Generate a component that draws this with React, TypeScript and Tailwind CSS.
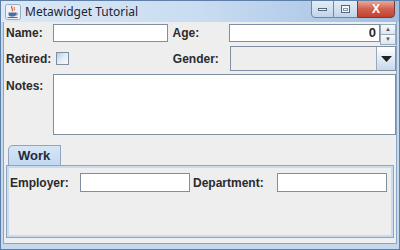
import React from "react";

const font = { fontFamily: '"Liberation Sans", Arial, sans-serif' };

function Field({ className = "" }: { className?: string }) {
  return <div className={"bg-white border border-[#7f8fa0] " + className} />;
}

function JavaIcon() {
  return (
    <svg width="16" height="16" viewBox="0 0 16 16">
      <rect x="0.5" y="0.5" width="15" height="15" rx="2" fill="#eef2f8" stroke="#9aaac0" />
      <path d="M7 2 C5 4 9 5 7 7" stroke="#e05a1a" strokeWidth="1.3" fill="none" />
      <path d="M9.5 3 C8 4.5 10.5 5 9 6.5" stroke="#e05a1a" strokeWidth="1" fill="none" />
      <path d="M3.5 8.5 H11 V10.5 C11 12 9.5 12.5 7.2 12.5 C5 12.5 3.5 12 3.5 10.5 Z" fill="#4a6fa5" />
      <path d="M11 9 C13 9 13 11 11 11" stroke="#4a6fa5" strokeWidth="1" fill="none" />
      <path d="M2.5 13.5 H12.5" stroke="#4a6fa5" strokeWidth="1" />
    </svg>
  );
}

export default function App() {
  return (
    <div
      className="w-[400px] h-[250px] flex flex-col bg-[#c5d8ec] border border-[#5d7fa8] overflow-hidden"
      style={font}
    >
      {/* Title bar */}
      <div className="h-[21px] flex items-start bg-gradient-to-r from-[#dbe8f6] via-[#c9dcf1] to-[#9fbfe2] relative">
        <div className="ml-[4px] mt-[3px]">
          <JavaIcon />
        </div>
        <div
          className="ml-[4px] mt-[3px] text-[12px] leading-[15px] text-[#1b2538]"
          style={{ fontFamily: '"Noto Sans", "Liberation Sans", sans-serif' }}
        >
          Metawidget Tutorial
        </div>
        <div className="ml-auto mr-[4px] flex h-[18px] -mt-px">
          <div className="w-[23px] h-full border border-[#6c87aa] rounded-bl-[4px] bg-gradient-to-b from-[#e4edf7] to-[#c2d4ea] flex items-center justify-center">
            <div className="w-[9px] h-[3px] bg-[#f4f7fb] border border-[#55667c]" />
          </div>
          <div className="w-[23px] h-full border-y border-[#6c87aa] bg-gradient-to-b from-[#e4edf7] to-[#c2d4ea] flex items-center justify-center">
            <div className="w-[9px] h-[8px] border border-[#55667c] bg-[#f4f7fb] flex items-center justify-center">
              <div className="w-[5px] h-[3px] border border-[#8898ac]" />
            </div>
          </div>
          <div className="w-[38px] h-full border border-[#7a3a36] rounded-br-[4px] bg-gradient-to-b from-[#e8a89b] via-[#d0614f] to-[#c2402d] flex items-center justify-center text-white font-bold text-[12px] leading-none">
            X
          </div>
        </div>
      </div>

      {/* Content */}
      <div className="flex-1 mx-[2px] mb-[5px] bg-[#eeeeee] border-l border-r border-b border-[#8aa4c4] flex flex-col text-[12px] font-bold text-[#2b2b2b]">
        {/* Row 1 */}
        <div className="flex items-center mt-[2px] h-[18px]">
          <div className="w-[49px] pl-[2px]">Name:</div>
          <Field className="w-[115px] h-[18px]" />
          <div className="w-[62px] pl-[5px]">Age:</div>
          <div className="flex h-[18px] w-[167px]">
            <div className="flex-1 bg-white border border-[#7f8fa0] flex items-center justify-end pr-[3px] text-[13px]">
              0
            </div>
            <div className="w-[16px] flex flex-col">
              <div className="flex-1 border border-[#9aa8b8] bg-gradient-to-b from-[#f8fafc] to-[#dde6ef] flex items-center justify-center text-[6px] text-[#555]">▲</div>
              <div className="flex-1 border border-t-0 border-[#9aa8b8] bg-gradient-to-b from-[#f8fafc] to-[#dde6ef] flex items-center justify-center text-[6px] text-[#555]">▼</div>
            </div>
          </div>
        </div>

        {/* Row 2 */}
        <div className="flex items-center mt-[4px] h-[25px]">
          <div className="w-[52px] pl-[2px]">Retired:</div>
          <div className="w-[13px] h-[13px] border border-[#7f8fa0] bg-gradient-to-br from-[#b7cce4] via-[#e4edf7] to-[#f6f9fc]" />
          <div className="w-[161px] pl-[104px]">Gender:</div>
          <div className="flex h-[25px] w-[167px] border border-[#7f8fa0]">
            <div className="flex-1 bg-[#eeeeee]" />
            <div className="w-[19px] border-l border-[#9aa8b8] bg-gradient-to-b from-[#ffffff] to-[#c6d8ec] flex items-center justify-center">
              <svg width="11" height="6" viewBox="0 0 11 6">
                <path d="M0 0 H11 L5.5 6 Z" fill="#222" />
              </svg>
            </div>
          </div>
        </div>

        {/* Row 3 */}
        <div className="flex mt-[3px]">
          <div className="w-[49px] pl-[2px] pt-[3px]">Notes:</div>
          <Field className="w-[343px] h-[61px]" />
        </div>

        {/* Tabs */}
        <div className="mt-[10px] ml-[2px] mr-[2px] flex flex-col">
          <div className="flex">
            <div className="ml-[2px] w-[53px] h-[20px] border border-b-0 border-[#8ea6c0] rounded-tl-[5px] bg-gradient-to-b from-[#d6e6f6] to-[#c3d9f0] text-[13px] text-[#1f2a3a] flex items-center pl-[9px]">
              Work
            </div>
          </div>
          <div className="h-[73px] border border-[#8ea6c0] bg-[#eeeeee] shadow-[inset_0_0_0_2px_#c8dbef] flex items-start pt-[7px] pl-[3px]">
            <div className="flex items-center h-[19px]">
              <div className="w-[70px]">Employer:</div>
              <Field className="w-[110px] h-[19px]" />
              <div className="w-[87px] pl-[3px]">Department:</div>
              <Field className="w-[110px] h-[19px]" />
            </div>
          </div>
        </div>
      </div>
    </div>
  );
}
